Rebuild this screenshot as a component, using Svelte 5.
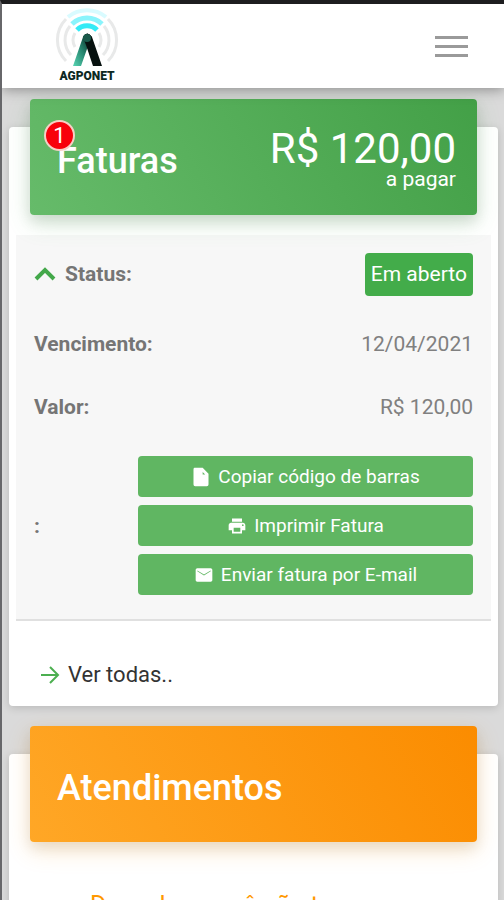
<script>
  const actions = [
    { icon: 'file', label: 'Copiar código de barras' },
    { icon: 'print', label: 'Imprimir Fatura' },
    { icon: 'mail', label: 'Enviar fatura por E-mail' }
  ];
  const paths = {
    file: 'M4 1h10l7 7v13q0 2-2 2H5q-2 0-2-2V3q0-2 1-2zm10 5v3h3z',
    print: 'M19 8H5c-1.660 0-3 1.340-3 3v6h4v4h12v-4h4v-6c0-1.660-1.340-3-3-3zm-3 11H8v-5h8v5zm3-7a1 1 0 1 1 0-2 1 1 0 0 1 0 2zM18 3H6v4h12V3z',
    mail: 'M20 4H4c-1.100 0-2 .9-2 2v12c0 1.100.9 2 2 2h16c1.100 0 2-.9 2-2V6c0-1.100-.9-2-2-2zm0 3.500-8 5-8-5V6.500l8 5 8-5v1z'
  };
</script>

<div class="page">
  <header>
    <a class="logo" href="#inicio" aria-label="AGPONET">
      <svg width="66" height="60" viewBox="0 0 66 60" aria-hidden="true">
        <defs>
          <linearGradient id="leg" x1="0" y1="1" x2="1" y2="0">
            <stop offset="0" stop-color="#58d6b4" />
            <stop offset=".5" stop-color="#23806a" />
            <stop offset="1" stop-color="#06110f" />
          </linearGradient>
        </defs>
        <g fill="none" transform="translate(33 32)">
          <g stroke="#e8e9e9" stroke-width="3">
            <path d="M-21-21a30 30 0 0 0 0 42M21-21a30 30 0 0 1 0 42M-17-14a22 22 0 0 0 1 29M17-14a22 22 0 0 1-1 29M-12-7a14 14 0 0 0 0 14M12-7a14 14 0 0 1 0 14" />
          </g>
          <path d="M-19-23a30 30 0 0 1 38 0" stroke="#d9fbff" stroke-width="4" />
          <path d="M-15-16a22 22 0 0 1 30 0" stroke="#8af4fc" stroke-width="5" />
          <path d="M-10-10a14 14 0 0 1 20 0" stroke="#33ebf6" stroke-width="5" />
        </g>
        <path d="M19 58 29 29q4-7 9 0l-5 12-6 17z" fill="url(#leg)" />
        <path d="M29 29q4-7 9 0l10 29h-9l-7-21z" fill="#07110f" />
        <circle cx="33" cy="30" r="4" fill="#1a5a4b" />
      </svg>
      <span>AGPONET</span>
    </a>
    <button class="menu" aria-label="Menu"><i></i><i></i><i></i></button>
  </header>

  <main>
    <section class="card">
      <div class="banner green">
        <h2>Faturas</h2>
        <span class="badge">1</span>
        <p class="total"><strong>R$ 120,00</strong><small>a pagar</small></p>
      </div>
      <dl>
        <div class="row status">
          <dt>
            <svg width="22" height="14" viewBox="0 0 22 14" aria-hidden="true"><path d="m2 12 9-9 9 9" fill="none" stroke="#43a84a" stroke-width="4" /></svg>
            Status:
          </dt>
          <dd><span class="tag">Em aberto</span></dd>
        </div>
        <div class="row"><dt>Vencimento:</dt><dd>12/04/2021</dd></div>
        <div class="row"><dt>Valor:</dt><dd>R$ 120,00</dd></div>
        <div class="row last">
          <dt>:</dt>
          <dd class="actions">
            {#each actions as action}
              <button>
                <svg width="20" height="20" viewBox="0 0 24 24" aria-hidden="true"><path d={paths[action.icon]} fill="currentColor" fill-rule="evenodd" /></svg>
                {action.label}
              </button>
            {/each}
          </dd>
        </div>
      </dl>
      <a class="all" href="#faturas">
        <svg width="20" height="18" viewBox="0 0 20 18" aria-hidden="true"><path d="M1 9h17M10 1l8 8-8 8" fill="none" stroke="#4caf50" stroke-width="2" /></svg>
        Ver todas..
      </a>
    </section>

    <section class="card">
      <div class="banner orange"><h2>Atendimentos</h2></div>
      <p class="empty">Desculpe, você não tem</p>
    </section>
  </main>
</div>

<style>
  :global(body) { margin: 0; background: #dadada; }
  .page {
    box-sizing: border-box;
    height: 100vh;
    overflow: hidden;
    display: flex;
    flex-direction: column;
    border-top: 4px solid #1d1d1f;
    border-left: 2px solid #67676a;
    background: #dadada;
    color: #757575;
    font: 21px/32px Roboto, sans-serif;
  }
  header {
    flex: none;
    display: flex;
    align-items: center;
    justify-content: space-between;
    height: 84px;
    padding: 0 32px 0 52px;
    background: #fff;
    box-shadow: 0 2px 12px rgba(0, 0, 0, .35);
    z-index: 1;
  }
  .logo { display: flex; flex-direction: column; align-items: center; color: #0d2923; text-decoration: none; }
  .logo span { font: 900 12px/16px Roboto, sans-serif; }
  button { font: inherit; border: 0; cursor: pointer; }
  .menu { display: flex; flex-direction: column; gap: 6px; padding: 4px; background: none; }
  .menu i { width: 33px; height: 3px; background: #9a9a9a; }
  main { display: flex; flex-direction: column; gap: 48px; padding: 39px 6px 0 7px; }
  .card {
    flex: none;
    background: #fff;
    border-radius: 4px;
    padding: 0 7px;
    box-shadow: 0 2px 8px rgba(0, 0, 0, .15);
  }
  .banner {
    position: relative;
    box-sizing: border-box;
    display: flex;
    align-items: center;
    justify-content: space-between;
    height: 116px;
    margin: -28px 14px 0;
    padding: 0 21px 0 27px;
    border-radius: 4px;
    color: #fff;
  }
  .green { background: linear-gradient(60deg, #66bb6a, #43a047); box-shadow: 0 8px 24px rgba(76, 175, 80, .2), 0 6px 14px rgba(0, 0, 0, .12); }
  .orange { background: linear-gradient(60deg, #ffa726, #fb8c00); box-shadow: 0 8px 24px rgba(255, 152, 0, .2), 0 6px 14px rgba(0, 0, 0, .1); }
  h2 { margin: 0; padding-top: 7px; font-size: 36px; line-height: 40px; font-weight: 500; }
  .badge {
    position: absolute;
    left: 14px;
    top: 21px;
    box-sizing: border-box;
    width: 31px;
    height: 31px;
    border: 2px solid #f6cfc5;
    border-radius: 50%;
    background: #f8000b;
    font-size: 22px;
    line-height: 27px;
    text-align: center;
  }
  .total { margin: 0; padding-top: 4px; display: flex; flex-direction: column; align-items: flex-end; }
  .total strong { font-size: 42px; line-height: 40px; font-weight: 400; }
  .total small { font-size: 21px; line-height: 20px; }
  dl { margin: 20px 0 0; padding: 1px 18px 24px; background: #f7f7f7; border-bottom: 2px solid #e0e0e0; }
  .row { display: flex; align-items: center; justify-content: space-between; height: 63px; }
  .status { height: 76px; }
  .last { height: auto; padding-top: 18px; }
  dt { display: flex; align-items: center; gap: 9px; font-weight: 700; }
  dd { margin: 0; color: #808080; }
  .tag { display: block; padding: 5px 6px 6px; border-radius: 4px; background: #43ac4a; color: #fff; }
  .actions { width: 335px; max-width: 90%; display: flex; flex-direction: column; gap: 8px; }
  .actions button {
    display: flex;
    align-items: center;
    justify-content: center;
    gap: 7px;
    height: 41px;
    padding: 0;
    border-radius: 4px;
    background: #60b662;
    color: #fff;
    font-size: 19px;
  }
  .all { display: flex; align-items: center; gap: 8px; padding: 38px 24px 15px; color: #333; text-decoration: none; font-size: 22px; }
  .empty { margin: 48px 0 24px; padding-left: 74px; font-size: 25px; color: #ff9800; }
</style>
